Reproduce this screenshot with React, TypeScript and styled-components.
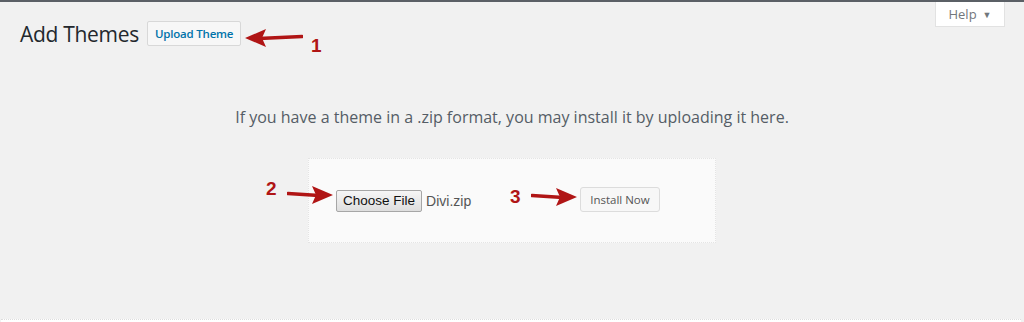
import { FC } from 'react';
import styled, { createGlobalStyle } from 'styled-components';

const GlobalStyle = createGlobalStyle`
  html, body {
    margin: 0;
    padding: 0;
    background: #f1f1f1;
  }
  body {
    font-family: 'Open Sans', 'Noto Sans', sans-serif;
    color: #444;
  }
`;

const Arrow: FC<{ width: number; flip?: boolean; drop?: number }> = ({ width, flip, drop = 0 }) => (
  <svg
    width={width}
    height="20"
    viewBox={`0 0 ${width} 20`}
    style={{ transform: flip ? 'scaleX(-1)' : undefined, marginTop: drop }}
  >
    <line x1="1" y1="8.5" x2={width - 14} y2="10.5" stroke="#b01515" strokeWidth="3.5" strokeLinecap="round" />
    <polygon points={`${width - 21},1 ${width},10 ${width - 21},19 ${width - 17},10`} fill="#b01515" />
  </svg>
);

const App: FC = () => (
  <>
    <GlobalStyle />
    <Page>
      <TopBar />
      <HelpTab>
        Help <Caret>▼</Caret>
      </HelpTab>
      <Header>
        <Title>Add Themes</Title>
        <UploadButton>Upload Theme</UploadButton>
        <Note style={{ left: 245, top: 26 }}>
          <Arrow width={58} flip />
          <Num style={{ marginLeft: -2, marginTop: 8 }}>1</Num>
        </Note>
      </Header>
      <Intro>If you have a theme in a .zip format, you may install it by uploading it here.</Intro>
      <UploadBox>
        <FileButton>Choose File</FileButton>
        <FileName>Divi.zip</FileName>
        <InstallButton>Install Now</InstallButton>
        <Note style={{ left: -43, top: 20 }}>
          <Num>2</Num>
          <Arrow width={46} drop={6} />
        </Note>
        <Note style={{ left: 201, top: 28 }}>
          <Num>3</Num>
          <Arrow width={46} />
        </Note>
      </UploadBox>
      <Footer />
    </Page>
  </>
);

export default App;

const Page = styled.div`
  position: relative;
  width: 1024px;
  height: 322px;
  overflow: hidden;
  display: flex;
  flex-direction: column;
`;
const TopBar = styled.div`
  height: 2px;
  background: #5b6066;
`;
const HelpTab = styled.div`
  position: absolute;
  top: 2px;
  right: 19px;
  width: 70px;
  height: 25px;
  box-sizing: border-box;
  background: #fff;
  border: 1px solid #e2e2e2;
  border-top: none;
  font-size: 13px;
  color: #72777c;
  display: flex;
  align-items: center;
  justify-content: center;
  gap: 6px;
`;
const Caret = styled.span`
  font-size: 9px;
  color: #72777c;
`;
const Header = styled.div`
  position: relative;
  display: flex;
  align-items: center;
  gap: 8px;
  padding: 18px 0 0 20px;
  height: 27px;
`;
const Title = styled.h1`
  margin: 0;
  font-size: 21px;
  font-weight: 400;
  color: #23282d;
  letter-spacing: -0.3px;
`;
const UploadButton = styled.span`
  height: 25px;
  box-sizing: border-box;
  padding: 0 7px;
  display: flex;
  align-items: center;
  border: 1px solid #d8d8d8;
  border-radius: 2px;
  background: #f7f7f7;
  color: #0073aa;
  font-size: 11.5px;
  font-weight: 600;
  letter-spacing: -0.2px;
`;
const Note = styled.div`
  position: absolute;
  display: flex;
  align-items: flex-start;
  gap: 10px;
`;
const Num = styled.span`
  font-family: 'Liberation Sans', Arial, sans-serif;
  font-weight: 700;
  font-size: 19px;
  line-height: 1;
  color: #b01515;
`;
const Intro = styled.p`
  margin: 59px 0 0;
  text-align: center;
  font-size: 16px;
  color: #555d66;
`;
const UploadBox = styled.div`
  position: relative;
  align-self: center;
  margin-top: 30px;
  width: 408px;
  height: 85px;
  box-sizing: border-box;
  background: #fafafa;
  border: 1px dotted #e4e4e4;
  display: flex;
  align-items: center;
  padding: 0 0 0 27px;
`;
const FileButton = styled.span`
  font-family: 'Liberation Sans', Arial, sans-serif;
  font-size: 13.5px;
  color: #111;
  height: 22px;
  box-sizing: border-box;
  padding: 0 6px;
  display: flex;
  align-items: center;
  border: 1px solid #a6a6a6;
  border-radius: 2px;
  background: linear-gradient(#f6f6f6, #dedede);
`;
const FileName = styled.span`
  margin-left: 4px;
  font-family: 'Liberation Sans', Arial, sans-serif;
  font-size: 14px;
  color: #555;
`;
const InstallButton = styled.span`
  margin-left: 109px;
  margin-top: -2px;
  height: 25px;
  box-sizing: border-box;
  padding: 0 9px;
  display: flex;
  align-items: center;
  border: 1px solid #dcdcdc;
  border-radius: 3px;
  background: #f7f7f7;
  color: #555;
  font-size: 11.5px;
`;
const Footer = styled.div`
  margin: auto 3px 0 1px;
  height: 2px;
  border-top: 1px dotted #ddd;
  background: #fff;
`;
